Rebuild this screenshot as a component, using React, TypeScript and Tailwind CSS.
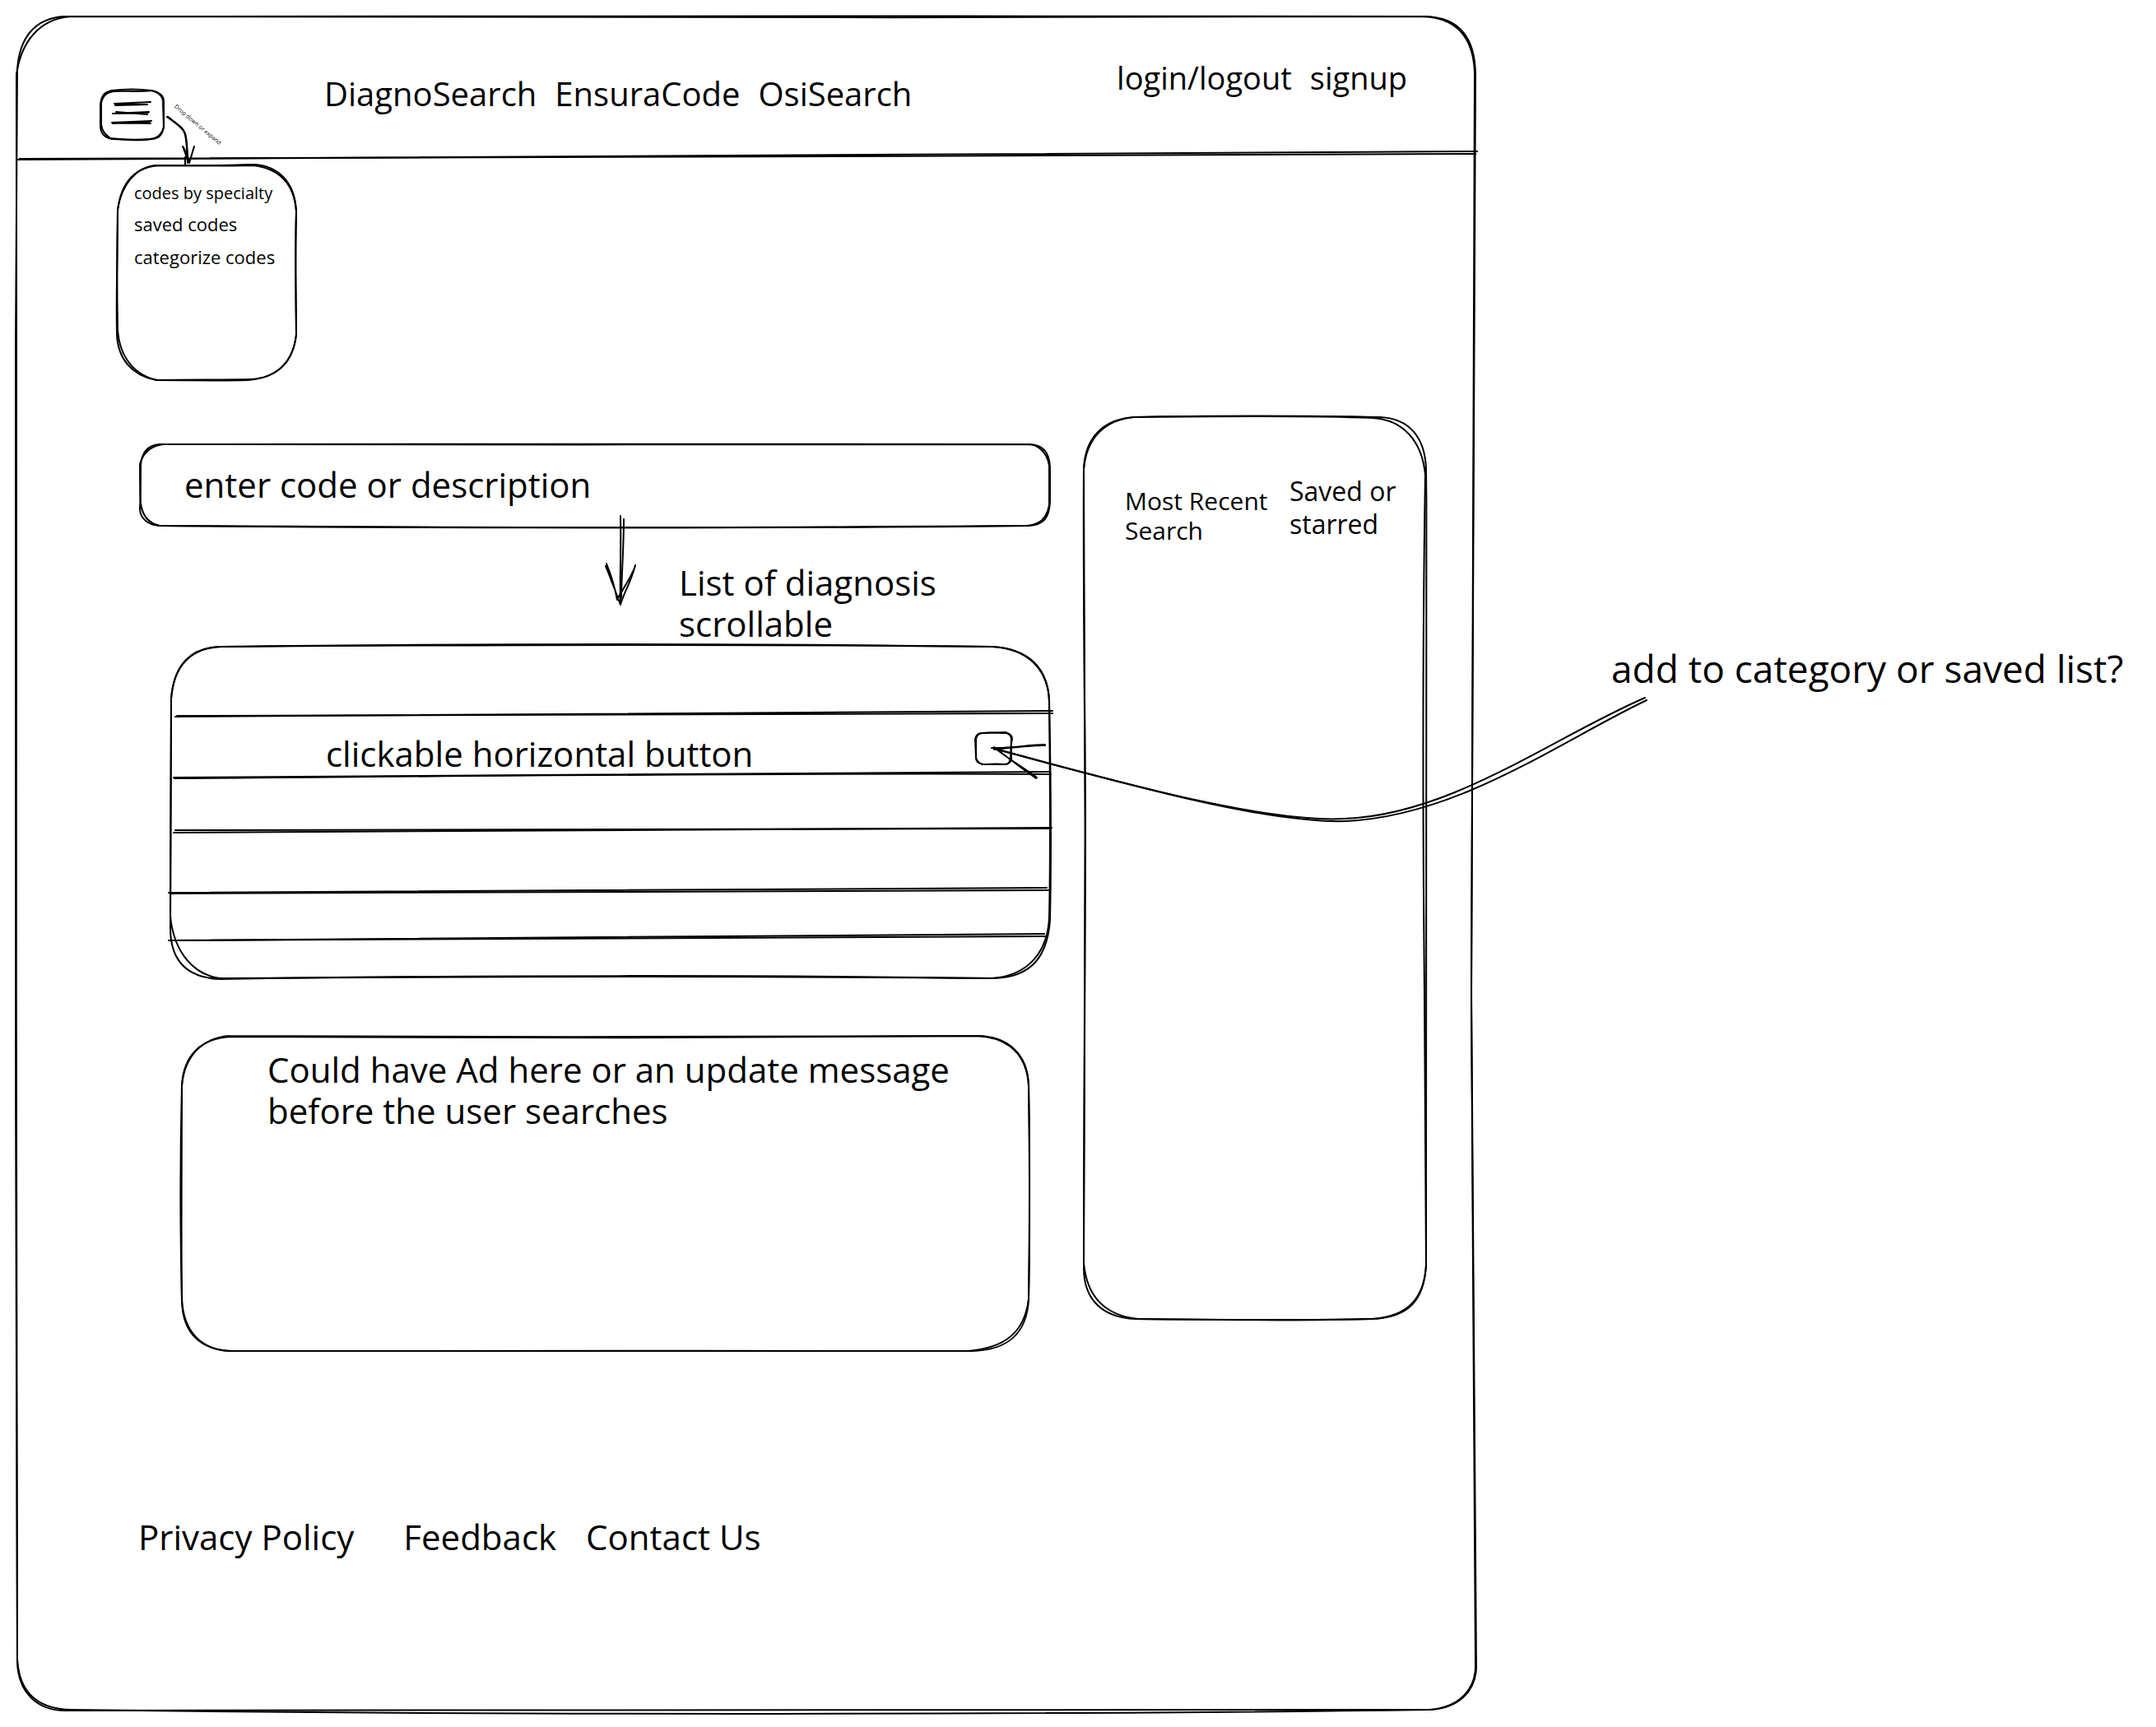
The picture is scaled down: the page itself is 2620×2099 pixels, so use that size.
import type { ReactNode } from "react";

type SketchProps = { w: number; h: number; strokes: string[] };

/* Hand-drawn outline that stretches with the box it decorates. */
function Sketch({ w, h, strokes }: SketchProps) {
  return (
    <svg
      aria-hidden="true"
      viewBox={`0 0 ${w} ${h}`}
      preserveAspectRatio="none"
      className="pointer-events-none absolute inset-0 h-full w-full overflow-visible fill-none stroke-black stroke-2"
    >
      {strokes.map((d) => (
        <path key={d} d={d} vectorEffect="non-scaling-stroke" strokeLinecap="round" />
      ))}
    </svg>
  );
}

const FRAME = [
  "M58 0C480 1 1180 2 1712 0C1750 1 1773 22 1773 72C1770 420 1767 800 1768 1180C1769 1480 1773 1760 1774 2007C1773 2036 1752 2056 1719 2058C1200 2059 620 2058 62 2059C24 2060 2 2036 1 2000C-1 1500 -2 800 -1 400C0 250 1 150 1 66C3 24 24 2 58 0",
  "M64 0C520 0 1160 -1 1708 0C1747 1 1770 22 1772 68C1771 420 1769 860 1768 1200C1768 1500 1772 1780 1773 2005C1773 2035 1751 2056 1716 2058C1300 2064 560 2065 66 2058C25 2057 3 2037 1 1996C0 1500 -1 900 0 400L0 70C6 30 28 4 64 0",
];

const LIST = [
  "M60 3C340 -1 740 -1 998 3C1042 5 1067 28 1068 70C1070 160 1071 240 1069 335C1066 380 1046 405 1000 406C740 402 360 402 62 407C22 406 0 386 0 345C1 240 0 150 1 66C4 26 24 4 60 3",
  "M64 3C340 1 740 0 1000 3C1041 6 1066 29 1068 68C1069 160 1070 240 1068 332C1066 376 1041 403 998 406C700 403 360 404 60 406C30 402 4 376 0 330C0 240 1 150 1 67C4 26 25 4 64 3",
];

const AD = [
  "M62 1C320 3 700 3 970 0C1006 1 1030 22 1031 60C1033 140 1032 240 1031 320C1029 362 1006 382 962 383C660 384 360 384 62 383C24 382 2 362 1 322C-1 240 -1 140 1 60C3 24 24 2 62 1",
  "M58 0C340 2 700 1 968 0C1007 2 1029 23 1031 61C1032 140 1033 240 1031 320C1026 360 1003 379 958 383C660 382 340 384 58 383C26 381 3 361 1 320C0 240 1 140 1 61C4 25 25 3 58 0",
];

const SIDE = [
  "M60 0C140 -2 280 -2 360 0C396 1 416 24 417 64C419 250 420 400 417 1030C415 1072 397 1094 352 1096C260 1099 160 1097 62 1096C24 1094 0 1074 0 1034C0 800 3 500 1 340C1 240 0 140 0 62C2 24 24 3 60 0",
  "M62 0C140 -1 280 -2 352 1C388 3 412 28 416 70C413 250 413 500 415 700C416 850 417 960 417 1032C414 1071 395 1093 352 1096C260 1098 160 1097 66 1096C28 1092 4 1072 0 1028C1 900 2 700 2 500C1 340 -1 160 0 64C3 26 25 3 62 0",
];

const FIELD = [
  "M24 0C300 -1 800 0 1080 0C1098 0 1105 10 1106 28L1106 70C1105 90 1098 98 1080 99C800 101 400 103 26 99C10 99 0 90 0 78C1 60 1 44 1 26C2 10 10 1 24 0",
  "M28 0C340 1 780 0 1082 0C1094 2 1103 12 1105 26L1105 74C1102 90 1094 98 1076 99C760 103 380 101 24 99C10 96 3 86 1 72C0 60 0 40 0 24C4 10 14 2 28 0",
];

const MENU = [
  "M52 1C90 2 130 1 168 0C198 2 217 22 219 56C217 110 219 150 219 206C216 238 198 259 160 262C120 263 90 262 48 262C18 256 1 236 0 206C-1 150 1 110 1 56C5 22 22 3 52 1",
  "M48 1C90 1 130 2 166 1C200 5 217 25 219 58C218 110 218 150 219 207C215 239 196 260 162 261C120 262 90 261 50 262C22 257 3 234 1 200C0 150 0 110 1 54C6 24 23 3 48 1",
];

const BURGER = [
  "M14 1C30 -1 46 -1 62 1C72 3 77 8 77 14L77 44C76 54 72 60 62 60C46 63 30 60 14 60C4 58 0 52 0 44L0 18C1 8 4 3 14 1",
  "M16 2C30 1 46 3 62 1C74 4 77 10 76 18L77 46C74 54 70 59 60 60C46 61 30 61 12 59C5 54 2 50 1 42L1 16C3 8 6 4 16 2",
  "M17 17L61 15M18 17L57 18M18 19L57 18",
  "M15 29L59 27M19 27L57 30M17 29L58 28",
  "M14 40L62 38M17 40L61 41M15 41L60 39",
];

const CHECK = [
  "M8 1C18 0 28 1 38 1C43 2 45 4 45 8C43 16 44 24 44 32C43 37 41 39 36 39C26 38 18 39 10 39C4 38 1 36 1 30L0 8C1 4 3 1 8 1",
  "M9 1L37 0C42 2 44 4 44 8L43 32C42 37 40 39 35 39L9 39C5 38 2 35 1 31L1 8C2 4 4 1 9 1",
];

const ROW_RULES = [
  ["M6 0L1072 -7", "M8 -1C400 -2 760 -4 1072 -4"],
  ["M4 0L1067 -7", "M5 1C400 -2 760 -6 1070 -4"],
  ["M4 3L1071 -3", "M6 0C400 -1 760 -2 1069 -2"],
  ["M-2 1L1065 -5", "M0 2C400 1 760 0 1067 -2"],
  ["M-2 1L1062 -7", "M0 1C400 0 760 -3 1063 -4"],
];

function Rule({ index }: { index: number }) {
  return (
    <svg
      aria-hidden="true"
      viewBox="0 0 1069 2"
      preserveAspectRatio="none"
      className="pointer-events-none absolute inset-x-0 bottom-0 h-[2px] w-full overflow-visible fill-none stroke-black stroke-2"
    >
      {ROW_RULES[index].map((d) => (
        <path key={d} d={d} vectorEffect="non-scaling-stroke" strokeLinecap="round" />
      ))}
    </svg>
  );
}

function Row({ className, index, children }: { className: string; index: number; children?: ReactNode }) {
  return (
    <li className={`relative flex items-center ${className}`}>
      {children}
      <Rule index={index} />
    </li>
  );
}

export default function App() {
  return (
    <div className="grid min-h-screen grid-cols-[1773fr_827fr] bg-white pt-5 pb-[19px] pl-5 font-['Open_Sans',sans-serif] text-[42px] leading-[50px] text-black">
      <div className="relative">
        <Sketch w={1773} h={2060} strokes={FRAME} />

        <header className="relative flex h-[172px] items-start pr-[83px] pl-[102px]">
          <div className="relative mt-[89px]">
            <button type="button" aria-label="Menu" className="relative block h-[61px] w-[77px]">
              <Sketch w={77} h={61} strokes={BURGER} />
            </button>
            <svg
              aria-hidden="true"
              viewBox="0 0 40 60"
              className="pointer-events-none absolute top-[32px] left-[80px] h-[60px] w-[40px] fill-none stroke-black stroke-2"
            >
              <path d="M1 1C10 8 19 13 22 20C25 27 25 40 26 57" strokeLinecap="round" />
              <path d="M1 0C12 9 20 13 23 21C26 31 25 44 27 56" strokeLinecap="round" />
              <path d="M20 37C23 43 24 50 28 57M21 38C25 46 26 52 28 56M34 37C32 44 30 50 28 57M33 40L29 54M23 50L23 59" strokeLinecap="round" />
            </svg>
            <span className="absolute top-[16px] left-[94px] origin-top-left rotate-40 text-[7px] leading-[9px] whitespace-nowrap">
              Drop down or expand
            </span>
          </div>
          <nav aria-label="Tools" className="mt-[69px] ml-[195px] flex gap-[22px] text-[40px] whitespace-nowrap">
            <a href="#diagno">DiagnoSearch</a>
            <a href="#ensura">EnsuraCode</a>
            <a href="#osi">OsiSearch</a>
          </nav>
          <nav aria-label="Account" className="mt-[49px] ml-auto flex gap-[22px] text-[38px] whitespace-nowrap">
            <a href="#login">login/logout</a>
            <a href="#signup">signup</a>
          </nav>
          <svg
            aria-hidden="true"
            viewBox="0 0 1773 10"
            preserveAspectRatio="none"
            className="pointer-events-none absolute inset-x-0 bottom-0 h-[10px] w-full overflow-visible fill-none stroke-black stroke-2"
          >
            <path d="M1 12C500 11 1200 4 1776 2" vectorEffect="non-scaling-stroke" />
            <path d="M3 11C500 9 1200 8 1774 5" vectorEffect="non-scaling-stroke" />
          </svg>
        </header>

        <ul className="relative mt-2 ml-[122px] flex h-[262px] w-[218px] flex-col gap-[10px] pt-[23px] pl-[21px] text-[22px] leading-[30px] whitespace-nowrap">
          <Sketch w={219} h={262} strokes={MENU} />
          <li className="text-[20px] leading-[24px]">
            <a href="#specialty">codes by specialty</a>
          </li>
          <li>
            <a href="#saved">saved codes</a>
          </li>
          <li>
            <a href="#categorize">categorize codes</a>
          </li>
        </ul>

        <main className="mt-[45px] grid grid-cols-[1fr_416px] gap-[41px] pr-[60px] pl-[150px]">
          <div className="pt-[33px]">
            <div className="relative h-[100px]">
              <Sketch w={1106} h={100} strokes={FIELD} />
              <input
                type="text"
                aria-label="enter code or description"
                placeholder="enter code or description"
                className="relative h-full w-full bg-transparent pb-1 pl-[54px] outline-none placeholder:text-black placeholder:opacity-100"
              />
            </div>

            <div className="flex h-[143px] items-start pl-[565px]">
              <svg
                aria-hidden="true"
                viewBox="0 0 40 112"
                className="relative -mt-[14px] h-[112px] w-[40px] shrink-0 fill-none stroke-black stroke-2"
              >
                <path d="M19 1C20 40 18 80 19 106" strokeLinecap="round" />
                <path d="M23 5C23 40 20 80 20 100" strokeLinecap="round" />
                <path d="M2 59C8 74 13 92 15 103M1 62C7 76 14 96 19 109M37 61C31 84 23 94 19 109M37 62C30 80 20 92 15 103" strokeLinecap="round" />
              </svg>
              <p className="mt-[43px] ml-[50px] w-[360px]">List of diagnosis scrollable</p>
            </div>

            <ul className="relative ml-[37px] flex h-[405px] flex-col">
              <Sketch w={1069} h={405} strokes={LIST} />
              <Row index={0} className="h-[90px]" />
              <Row index={1} className="h-[74px]">
                <button type="button" className="h-full flex-1 pt-[12px] pl-[189px] text-left">
                  clickable horizontal button
                </button>
                <div className="relative mr-[47px] h-[40px] w-[44px]">
                  <Sketch w={44} h={40} strokes={CHECK} />
                  <input
                    type="checkbox"
                    aria-label="add to category or saved list"
                    className="block h-full w-full appearance-none checked:bg-gray-200"
                  />
                  <svg
                    aria-hidden="true"
                    viewBox="0 0 800 155"
                    className="pointer-events-none absolute top-[-42px] left-[19px] z-10 h-[155px] w-[800px] overflow-visible fill-none stroke-black stroke-2"
                  >
                    <path d="M795 0C680 50 560 142 430 147C340 152 180 110 2 61" strokeLinecap="round" />
                    <path d="M797 3C690 54 570 143 432 150C340 153 190 112 4 62" strokeLinecap="round" />
                    <path d="M1 61C24 62 46 57 66 57M4 63C30 60 50 58 66 58M6 62C24 76 44 88 56 97M4 60C22 74 38 86 55 98" strokeLinecap="round" />
                  </svg>
                </div>
              </Row>
              <Row index={2} className="h-[64px]" />
              <Row index={3} className="h-[75px]" />
              <Row index={4} className="h-[58px]" />
            </ul>

            <section className="relative mt-[71px] mr-[26px] ml-[50px] h-[383px] pt-[16px] pl-[105px]">
              <Sketch w={1031} h={383} strokes={AD} />
              <p className="max-w-[880px]">Could have Ad here or an update message before the user searches</p>
            </section>
          </div>

          <aside className="relative flex h-[1096px] items-start pt-[70px] pl-[50px] text-[30px] leading-[36px]">
            <Sketch w={417} h={1096} strokes={SIDE} />
            <h2 className="mt-[14px] w-[180px]">Most Recent Search</h2>
            <h2 className="ml-5 w-[150px] text-[32px] leading-[40px]">Saved or starred</h2>
          </aside>
        </main>

        <footer className="mt-[201px] flex pb-[186px] pl-[148px] whitespace-nowrap">
          <a href="#privacy" className="mr-[60px]">
            Privacy Policy
          </a>
          <a href="#feedback" className="mr-[36px]">
            Feedback
          </a>
          <a href="#contact">Contact Us</a>
        </footer>
      </div>

      <p className="pt-[767px] pl-[165px] text-[46px] whitespace-nowrap">add to category or saved list?</p>
    </div>
  );
}
